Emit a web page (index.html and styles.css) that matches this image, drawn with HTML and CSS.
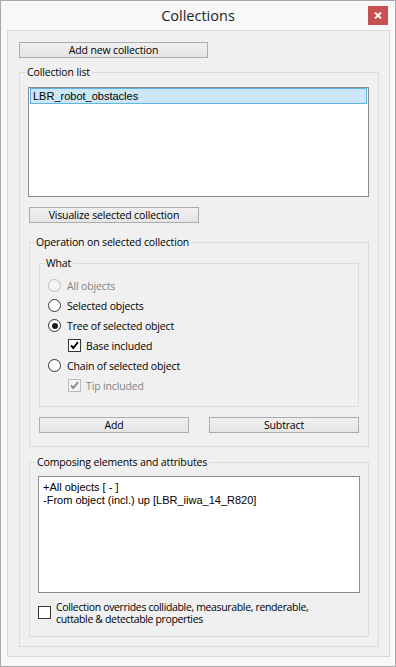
FILE: index.html
```html
<!DOCTYPE html>
<html>

<head>
    <meta charset="UTF-8">
    <title>Collections</title>
    <link rel="stylesheet" href="styles.css">
</head>

<body>
    <div class="window">
        <div class="titlebar">
            <span></span>
            <span class="title">Collections</span>
            <span class="close">
                <svg width="8" height="7" viewBox="0 0 8 7">
                    <path d="M1 0.5 L7 6.5 M7 0.5 L1 6.5" stroke="#fff" stroke-width="1.8" fill="none"/>
                </svg>
            </span>
        </div>

        <div class="frame">
            <button class="btn btn-new">Add new collection</button>

            <fieldset class="group group-list">
                <legend>Collection list</legend>
                <div class="group-body list-body">
                    <div class="listbox coll-list">
                        <div class="item selected">LBR_robot_obstacles</div>
                    </div>

                    <button class="btn btn-vis">Visualize selected collection</button>

                    <fieldset class="group group-op">
                        <legend>Operation on selected collection</legend>
                        <div class="group-body op-body">
                            <fieldset class="group group-what">
                                <legend>What</legend>
                                <div class="group-body what-body">
                                    <div class="opt disabled"><span class="radio"></span>All objects</div>
                                    <div class="opt"><span class="radio"></span>Selected objects</div>
                                    <div class="opt"><span class="radio checked"></span>Tree of selected object</div>
                                    <div class="opt sub">
                                        <span class="check">
                                            <svg width="11" height="11" viewBox="0 0 11 11">
                                                <path d="M2 5.5 L4.3 8 L9 2.2" stroke="#000" stroke-width="1.9" fill="none"/>
                                            </svg>
                                        </span>Base included
                                    </div>
                                    <div class="opt"><span class="radio"></span>Chain of selected object</div>
                                    <div class="opt sub disabled">
                                        <span class="check">
                                            <svg width="11" height="11" viewBox="0 0 11 11">
                                                <path d="M2 5.5 L4.3 8 L9 2.2" stroke="#8a8a8a" stroke-width="1.9" fill="none"/>
                                            </svg>
                                        </span>Tip included
                                    </div>
                                </div>
                            </fieldset>

                            <div class="op-buttons">
                                <button class="btn btn-op">Add</button>
                                <button class="btn btn-op">Subtract</button>
                            </div>
                        </div>
                    </fieldset>

                    <fieldset class="group group-comp">
                        <legend>Composing elements and attributes</legend>
                        <div class="group-body comp-body">
                            <div class="listbox comp-list">
                                <div class="line">+All objects [ - ]</div>
                                <div class="line">-From object (incl.) up [LBR_iiwa_14_R820]</div>
                            </div>
                            <div class="override">
                                <span class="check"></span>
                                <span class="override-text">Collection overrides collidable, measurable, renderable,<br>cuttable &amp; detectable properties</span>
                            </div>
                        </div>
                    </fieldset>
                </div>
            </fieldset>
        </div>
    </div>
</body>

</html>
```

FILE: styles.css
```css
html, body {
    margin: 0;
    background: #fff;
}

body {
    font-family: 'Open Sans', 'Noto Sans', sans-serif;
    font-size: 10.5px;
    letter-spacing: -0.15px;
    color: #000;
    overflow: hidden;
}

.window {
    width: 396px;
    height: 667px;
    box-sizing: border-box;
    border: 1px solid #a8a8a8;
    background: #f8f8f8;
    display: flex;
    flex-direction: column;
}

.titlebar {
    height: 29px;
    flex-shrink: 0;
    display: grid;
    grid-template-columns: 1fr auto 1fr;
    align-items: start;
}

.title {
    font-size: 14.5px;
    letter-spacing: 0;
    line-height: 29px;
    color: #222;
}

.close {
    justify-self: end;
    margin-top: 5px;
    margin-right: 7px;
    width: 20px;
    height: 19px;
    background: #c75050;
    display: flex;
    align-items: center;
    justify-content: center;
}

.frame {
    flex: 1;
    margin: 0 5px 9px 6px;
    border: 1px solid #dadada;
    background: #f0f0f0;
    padding: 11px 10px 9px 11px;
    display: flex;
    flex-direction: column;
    align-items: flex-start;
}

.btn {
    font-family: inherit;
    font-size: 10.5px;
    letter-spacing: -0.15px;
    color: #000;
    height: 16px;
    line-height: 14px;
    padding: 0;
    border: 1px solid #acacac;
    background: linear-gradient(#f0f0f0, #e5e5e5);
    box-sizing: border-box;
}

.btn-new {
    width: 189px;
}

/* group boxes */
.group {
    margin: 0;
    padding: 0;
    min-width: 0;
    border: 1px solid #dcdcdc;
}

.group legend {
    padding: 0 2px;
    margin-left: 5px;
    line-height: 14px;
}

.group-list {
    margin-top: 7px;
    align-self: stretch;
    flex: 1;
    display: flex;
    flex-direction: column;
}

.list-body {
    padding: 8px 9px 9px 8px;
    display: flex;
    flex-direction: column;
    align-items: flex-start;
}

.listbox {
    background: #fff;
    border: 1px solid #8a8d93;
    box-sizing: border-box;
    font-family: 'Liberation Sans', sans-serif;
    font-size: 11px;
    letter-spacing: 0;
}

.coll-list {
    align-self: stretch;
    height: 110px;
    padding: 0 1px;
}

.item {
    height: 16px;
    line-height: 14px;
    box-sizing: border-box;
    padding-left: 2px;
}

.item.selected {
    background: #cce8f6;
    border: 1px solid #5fb4e2;
}

.btn-vis {
    width: 170px;
    margin: 10px 0 0 1px;
}

.group-op {
    margin: 12px 0 0 1px;
    align-self: stretch;
}

.group-op legend {
    margin-left: 4px;
}

.op-body {
    padding: 7px 9px 13px 9px;
}

.what-body {
    padding: 5px 0 11px 8px;
}

.opt {
    height: 20px;
    display: flex;
    align-items: center;
    padding-top: 1px;
    box-sizing: border-box;
}

.opt.sub {
    padding-left: 20px;
}

.opt.disabled {
    color: #838383;
}

.radio {
    width: 13px;
    height: 13px;
    box-sizing: border-box;
    border: 1px solid #333;
    border-radius: 50%;
    background: #fff;
    margin-right: 6px;
    display: flex;
    align-items: center;
    justify-content: center;
}

.radio.checked::after {
    content: "";
    width: 6px;
    height: 6px;
    border-radius: 50%;
    background: #1a1a1a;
}

.disabled .radio {
    border-color: #bcbcbc;
    background: #f4f4f4;
}

.check {
    width: 13px;
    height: 13px;
    box-sizing: border-box;
    border: 1px solid #333;
    background: #fff;
    margin-right: 5px;
    display: flex;
    align-items: center;
    justify-content: center;
    flex-shrink: 0;
}

.disabled .check {
    border-color: #bcbcbc;
    background: #f4f4f4;
}

.op-buttons {
    display: flex;
    justify-content: space-between;
    margin-top: 10px;
}

.btn-op {
    width: 150px;
}

.group-comp {
    margin: 8px 0 0 1px;
    align-self: stretch;
}

.comp-body {
    padding: 7px 8px 11px 8px;
}

.comp-list {
    height: 117px;
    padding: 4px 0 0 4px;
    line-height: 13px;
}

.override {
    display: flex;
    align-items: flex-start;
    margin-top: 8px;
    line-height: 12px;
}

.override-text {
    letter-spacing: -0.35px;
}

.override .check {
    margin-top: 5px;
    margin-right: 5px;
}
```
